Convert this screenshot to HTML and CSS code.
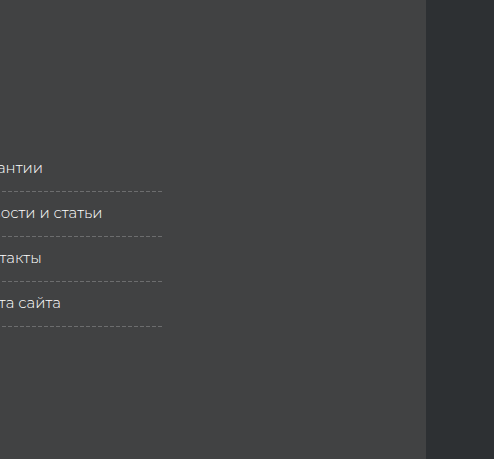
FILE: index.html
```html
<!DOCTYPE html>
<html lang="ru">
<head>
<meta charset="utf-8">
<title>Меню</title>
<link rel="stylesheet" href="styles.css">
</head>
<body>
<main class="page">
  <nav class="panel">
    <ul class="menu">
      <li class="item"><a class="link" href="#">Гарантии</a></li>
      <li class="item"><a class="link" href="#">Новости и статьи</a></li>
      <li class="item"><a class="link" href="#">Контакты</a></li>
      <li class="item"><a class="link" href="#">Карта сайта</a></li>
    </ul>
  </nav>
  <aside class="side"></aside>
</main>
</body>
</html>
```
FILE: styles.css
```css
body {
  margin: 0;
  background: #fff;
  font-family: Montserrat, Inter, "Liberation Sans", sans-serif;
  font-size: 15px;
  font-weight: 300;
  line-height: 18px;
}

.page {
  box-sizing: border-box;
  display: grid;
  grid-template-columns: 1fr 68px;
  min-height: 100vh;
  border-bottom: 1px solid #fff;
  overflow: hidden;
}

.panel {
  padding-top: 147px;
  background: #414243;
}

.side {
  background: #2d3033;
}

.menu {
  list-style: none;
  width: 192px;
  margin: 0 0 0 -30px;
  padding: 0;
}

.item {
  padding: 12px 0;
  background: repeating-linear-gradient(90deg, transparent 0 2px, #6c6d6e 2px 6px) left bottom / 100% 1px no-repeat;
}

.item .link {
  display: block;
  height: 21px;
  color: #fff;
  text-decoration: none;
}
```
